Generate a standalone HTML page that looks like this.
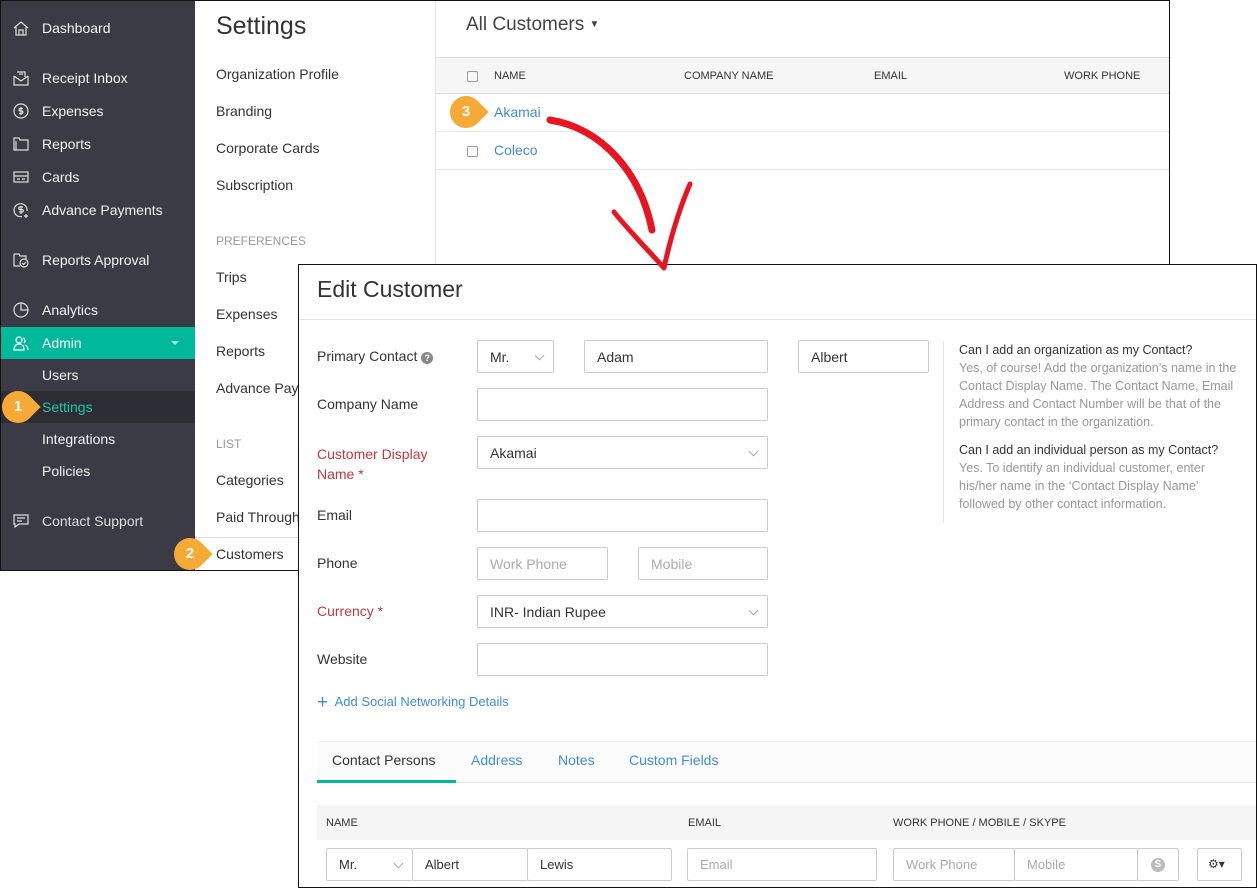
<!DOCTYPE html>
<html><head><meta charset="utf-8"><style>
*{box-sizing:border-box;margin:0;padding:0}
body{width:1257px;height:888px;background:#fff;font-family:"Liberation Sans",sans-serif;position:relative;overflow:hidden;color:#333}
.abs{position:absolute}
#bg{left:0;top:0;width:1170px;height:571px;border:1px solid #111;overflow:hidden}
#side{left:0;top:0;width:194px;height:571px;background:#3b3b45}
.si{position:absolute;left:41px;color:#f2f2f2;font-size:14px}
.ic{position:absolute;left:12px;width:16px;height:16px}
#set{left:194px;top:0;width:241px;height:571px;border-right:1px solid #e3e3e3;background:#fff}
.st{position:absolute;left:21px;font-size:14px;color:#333}
.sh{position:absolute;left:21px;font-size:12px;color:#999}
.badge{position:absolute;width:40px;height:32px;}
.badge b{position:absolute;left:0;top:0;width:32px;height:32px;border-radius:50% 0 50% 50%;background:#f6a935;transform:rotate(45deg)}
.badge span{position:absolute;left:0;top:0;width:32px;height:32px;color:#fff;font-weight:bold;font-size:15px;line-height:32px;text-align:center}
.in{position:absolute;height:33px;border:1px solid #ccc;border-radius:2px;font-size:14px;padding:8px 12px;color:#333;background:#fff}
.lb{position:absolute;left:18px;font-size:14px;color:#333}
.red{color:#c4373f}
.ph{color:#aaa}
.chev{position:absolute;right:10px;top:11px;width:7px;height:7px;border-right:1px solid #aaa;border-bottom:1px solid #aaa;transform:rotate(45deg)}
.th{position:absolute;font-size:11px;color:#333}
.cb{position:absolute;width:11px;height:11px;border:1px solid #999;border-radius:2px}
#ov{left:298px;top:264px;width:959px;height:624px;border:1px solid #111;background:#fff}
</style></head><body>
<div id="bg" class="abs">
 <div id="side" class="abs">
  <svg class="ic" style="top:19px" viewBox="0 0 16 16" fill="none" stroke="#ddd" stroke-width="1.2"><path d="M1 8L8 2l7 6M3 7v8h10V7M6 15v-5h4v5"/></svg>
  <div class="si" style="top:19px">Dashboard</div>
  <svg class="ic" style="top:69px" viewBox="0 0 16 16" fill="none" stroke="#ddd" stroke-width="1.2"><path d="M1 6v9h14V6M1 6l7 5 7-5M4 2h8v5M6 4h4"/></svg>
  <div class="si" style="top:69px">Receipt Inbox</div>
  <svg class="ic" style="top:102px" viewBox="0 0 16 16" fill="none" stroke="#ddd" stroke-width="1.2"><circle cx="8" cy="8" r="7"/><path d="M10 5.5H7a1.3 1.3 0 0 0 0 2.5h2a1.3 1.3 0 0 1 0 2.5H6M8 4v8"/></svg>
  <div class="si" style="top:102px">Expenses</div>
  <svg class="ic" style="top:135px" viewBox="0 0 16 16" fill="none" stroke="#ddd" stroke-width="1.2"><path d="M1 2h5l1 2h8v10H1zM3 5v9"/></svg>
  <div class="si" style="top:135px">Reports</div>
  <svg class="ic" style="top:168px" viewBox="0 0 16 16" fill="none" stroke="#ddd" stroke-width="1.2"><rect x="1" y="3" width="14" height="10"/><path d="M1 7h14M4 10h3M9 10h3"/></svg>
  <div class="si" style="top:168px">Cards</div>
  <svg class="ic" style="top:201px" viewBox="0 0 16 16" fill="none" stroke="#ddd" stroke-width="1.2"><path d="M14 9A6.5 6.5 0 1 0 9 14.5"/><path d="M10 5H7a1.2 1.2 0 0 0 0 2.5h2a1.2 1.2 0 0 1 0 2.5H6M8 4v8M13 12v4M11 14h4"/></svg>
  <div class="si" style="top:201px">Advance Payments</div>
  <svg class="ic" style="top:251px" viewBox="0 0 16 16" fill="none" stroke="#ddd" stroke-width="1.2"><path d="M1 2h5l1 2h6v3M1 2v12h6"/><circle cx="11" cy="11" r="4"/><path d="M9 11l1.5 1.5L13 10"/></svg>
  <div class="si" style="top:251px">Reports Approval</div>
  <svg class="ic" style="top:301px" viewBox="0 0 16 16" fill="none" stroke="#ddd" stroke-width="1.2"><circle cx="8" cy="8" r="7"/><path d="M8 1v7h7"/></svg>
  <div class="si" style="top:301px">Analytics</div>
  <div class="abs" style="left:0;top:326px;width:194px;height:32px;background:#00b99a"></div>
  <svg class="ic" style="top:334px" viewBox="0 0 16 16" fill="none" stroke="#fff" stroke-width="1.2"><circle cx="6" cy="5" r="3"/><path d="M1 15c0-4 2-6 5-6s5 2 5 6zM10 3a3 3 0 0 1 1 5M12 10c2 1 3 3 3 5"/></svg>
  <div class="si" style="top:334px;color:#fff">Admin</div>
  <div class="abs" style="left:170px;top:340px;border-top:4px solid #a8e6d9;border-left:4px solid transparent;border-right:4px solid transparent"></div>
  <div class="si" style="top:366px">Users</div>
  <div class="abs" style="left:0;top:390px;width:194px;height:32px;background:#2d2d36"></div>
  <div class="si" style="top:398px;color:#1fc5a4">Settings</div>
  <div class="si" style="top:430px">Integrations</div>
  <div class="si" style="top:462px">Policies</div>
  <svg class="ic" style="top:512px" viewBox="0 0 16 16" fill="none" stroke="#ddd" stroke-width="1.2"><path d="M1 2h14v9H6l-4 3v-3H1zM4 5h8M4 8h5"/></svg>
  <div class="si" style="top:512px;color:#ddd">Contact Support</div>
 </div>
 <div class="badge" style="left:1px;top:390px"><b></b><span>1</span></div>
 <div id="set" class="abs">
  <div class="abs" style="left:21px;top:11px;font-size:25px;color:#333">Settings</div>
  <div class="st" style="top:65px">Organization Profile</div>
  <div class="st" style="top:102px">Branding</div>
  <div class="st" style="top:139px">Corporate Cards</div>
  <div class="st" style="top:176px">Subscription</div>
  <div class="sh" style="top:233px">PREFERENCES</div>
  <div class="st" style="top:268px">Trips</div>
  <div class="st" style="top:305px">Expenses</div>
  <div class="st" style="top:342px">Reports</div>
  <div class="st" style="top:379px">Advance Payments</div>
  <div class="sh" style="top:436px">LIST</div>
  <div class="st" style="top:471px">Categories</div>
  <div class="st" style="top:508px">Paid Through</div>
  <div class="abs" style="left:0;top:536px;width:240px;border-top:1px solid #ddd"></div>
  <div class="st" style="top:545px">Customers</div>
 </div>
 <div class="badge" style="left:173px;top:537px"><b></b><span>2</span></div>
 <div class="abs" style="left:435px;top:0;width:735px;height:571px">
  <div class="abs" style="left:30px;top:13px;font-size:19px;color:#444">All Customers <span style="font-size:10px;vertical-align:3px">▼</span></div>
  <div class="abs" style="left:0;top:56px;width:735px;height:37px;background:#f6f6f6;border-top:1px solid #ddd;border-bottom:1px solid #ddd"></div>
  <div class="cb" style="left:31px;top:70px"></div>
  <div class="th" style="left:58px;top:69px">NAME</div>
  <div class="th" style="left:248px;top:69px">COMPANY NAME</div>
  <div class="th" style="left:438px;top:69px">EMAIL</div>
  <div class="th" style="left:628px;top:69px">WORK PHONE</div>
  <div class="abs" style="left:58px;top:103px;font-size:14px;color:#408dd5">Akamai</div>
  <div class="abs" style="left:0;top:130px;width:735px;border-top:1px solid #e8e8e8"></div>
  <div class="cb" style="left:31px;top:145px"></div>
  <div class="abs" style="left:58px;top:141px;font-size:14px;color:#408dd5">Coleco</div>
  <div class="abs" style="left:0;top:168px;width:735px;border-top:1px solid #e8e8e8"></div>
 </div>
 <div class="badge" style="left:449px;top:95px"><b></b><span>3</span></div>
</div>
<div id="ov" class="abs">
 <div class="abs" style="left:18px;top:11px;font-size:23px;color:#333">Edit Customer</div>
 <div class="abs" style="left:0;top:54px;width:957px;border-top:1px solid #e3e3e3"></div>
 <div class="lb" style="top:83px">Primary Contact <span style="display:inline-block;width:12px;height:12px;border-radius:50%;background:#888;color:#fff;font-size:9px;text-align:center;line-height:12px;font-weight:bold">?</span></div>
 <div class="in" style="left:178px;top:75px;width:77px">Mr.<div class="chev"></div></div>
 <div class="in" style="left:285px;top:75px;width:184px">Adam</div>
 <div class="in" style="left:499px;top:75px;width:131px">Albert</div>
 <div class="lb" style="top:131px">Company Name</div>
 <div class="in" style="left:178px;top:123px;width:291px"></div>
 <div class="lb red" style="top:179px;line-height:20px">Customer Display<br>Name *</div>
 <div class="in" style="left:178px;top:171px;width:291px">Akamai<div class="chev"></div></div>
 <div class="lb" style="top:242px">Email</div>
 <div class="in" style="left:178px;top:234px;width:291px"></div>
 <div class="lb" style="top:290px">Phone</div>
 <div class="in ph" style="left:178px;top:282px;width:131px">Work Phone</div>
 <div class="in ph" style="left:339px;top:282px;width:130px">Mobile</div>
 <div class="lb red" style="top:338px">Currency *</div>
 <div class="in" style="left:178px;top:330px;width:291px">INR- Indian Rupee<div class="chev"></div></div>
 <div class="lb" style="top:386px">Website</div>
 <div class="in" style="left:178px;top:378px;width:291px"></div>
 <div class="abs" style="left:18px;top:427px;font-size:13px;color:#408dd5"><span style="font-size:19px;vertical-align:-2px">+</span>&nbsp; Add Social Networking Details</div>
 <div class="abs" style="left:644px;top:76px;height:182px;border-left:1px solid #e5e5e5"></div>
 <div class="abs" style="left:660px;top:76px;width:280px;font-size:12.5px;line-height:18px;color:#999">
  <div style="color:#333">Can I add an organization as my Contact?</div>
  Yes, of course! Add the organization’s name in the Contact Display Name. The Contact Name, Email Address and Contact Number will be that of the primary contact in the organization.
  <div style="color:#333;margin-top:10px">Can I add an individual person as my Contact?</div>
  Yes. To identify an individual customer, enter his/her name in the ‘Contact Display Name’ followed by other contact information.
 </div>
 <div class="abs" style="left:18px;top:476px;width:939px;height:42px;background:#fcfcfc;border-top:1px solid #eee;border-bottom:1px solid #e5e5e5"></div>
 <div class="abs" style="left:18px;top:515px;width:139px;height:3px;background:#00b99a"></div>
 <div class="abs" style="left:33px;top:487px;font-size:14px;color:#333">Contact Persons</div>
 <div class="abs" style="left:172px;top:487px;font-size:14px;color:#408dd5">Address</div>
 <div class="abs" style="left:259px;top:487px;font-size:14px;color:#408dd5">Notes</div>
 <div class="abs" style="left:330px;top:487px;font-size:14px;color:#408dd5">Custom Fields</div>
 <div class="abs" style="left:18px;top:540px;width:939px;height:35px;background:#f5f5f5"></div>
 <div class="th" style="left:27px;top:552px">NAME</div>
 <div class="th" style="left:389px;top:552px">EMAIL</div>
 <div class="th" style="left:594px;top:552px">WORK PHONE / MOBILE / SKYPE</div>
 <div class="in" style="left:27px;top:583px;width:87px;font-size:13px">Mr.<div class="chev"></div></div>
 <div class="in" style="left:113px;top:583px;width:116px;font-size:13px">Albert</div>
 <div class="in" style="left:228px;top:583px;width:145px;font-size:13px">Lewis</div>
 <div class="in ph" style="left:388px;top:583px;width:190px;font-size:13px">Email</div>
 <div class="in ph" style="left:594px;top:583px;width:122px;font-size:13px">Work Phone</div>
 <div class="in ph" style="left:715px;top:583px;width:124px;font-size:13px">Mobile</div>
 <div class="in" style="left:838px;top:583px;width:42px"><span style="position:absolute;left:13px;top:9px;width:14px;height:14px;border-radius:50%;background:#bbb;color:#fff;font-size:10px;text-align:center;line-height:14px;font-weight:bold">S</span></div>
 <div class="in" style="left:898px;top:583px;width:45px;font-size:12px;padding:8px 10px">⚙▾</div>
</div>
<svg class="abs" style="left:540px;top:100px" width="160" height="180" viewBox="540 100 160 180" fill="none" stroke="#e8141f" stroke-linecap="round" stroke-linejoin="round">
 <path d="M550 120C600 128 640 170 652 230" stroke-width="7"/>
 <path d="M614 212C630 232 650 252 664 268C670 240 678 212 690 184" stroke-width="5"/>
</svg>
</body></html>
